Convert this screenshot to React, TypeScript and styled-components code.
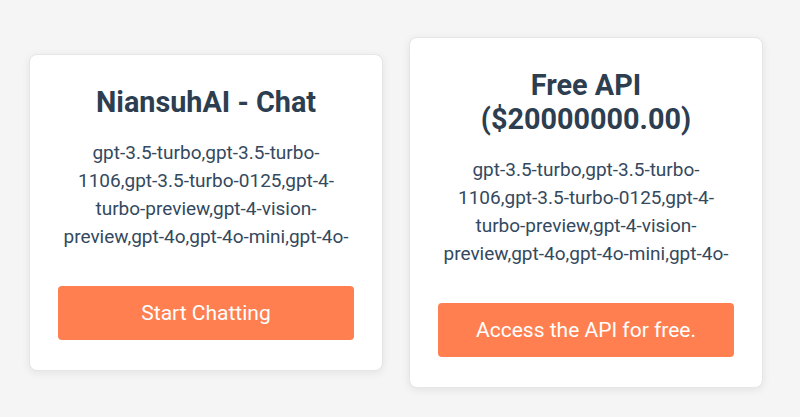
import React from "react";
import styled, { createGlobalStyle } from "styled-components";

const GlobalStyle = createGlobalStyle`
  html, body {
    margin: 0;
    padding: 0;
    background: #f5f5f5;
    font-family: Roboto, "Liberation Sans", Arial, sans-serif;
  }
`;

const MODELS =
  "gpt-3.5-turbo,gpt-3.5-turbo-1106,gpt-3.5-turbo-0125,gpt-4-turbo-preview,gpt-4-vision-preview,gpt-4o,gpt-4o-mini,gpt-4o-2024-08-06,claude-3-haiku";

const plans = [
  { title: "NiansuhAI - Chat", action: "Start Chatting" },
  { title: "Free API ($20000000.00)", action: "Access the API for free." },
];

const App = () => {
  return (
    <>
      <GlobalStyle />
      <Page>
        {plans.map((plan) => (
          <Card key={plan.title}>
            <Title>{plan.title}</Title>
            <Models>{MODELS}</Models>
            <ActionButton>{plan.action}</ActionButton>
          </Card>
        ))}
      </Page>
    </>
  );
};

export default App;

const Page = styled.div`
  display: flex;
  align-items: center;
  gap: 26px;
  min-height: 417px;
  box-sizing: border-box;
  padding: 7px 0 0 29px;
`;

const Card = styled.div`
  width: 354px;
  box-sizing: border-box;
  padding: 30px 28px;
  background: #ffffff;
  border: 1px solid #e6e6e6;
  border-radius: 8px;
  box-shadow: 0 2px 8px rgba(0, 0, 0, 0.08);
  text-align: center;
  display: flex;
  flex-direction: column;
`;

const Title = styled.h2`
  margin: 0 0 20px;
  font-size: 28.8px;
  font-weight: 700;
  color: #2c3e50;
`;

const Models = styled.p`
  margin: 0 0 35px;
  font-size: 19px;
  line-height: 28px;
  max-height: 112px;
  overflow: hidden;
  color: #34495e;
`;

const ActionButton = styled.button`
  border: none;
  border-radius: 4px;
  background: #ff7f50;
  color: #ffffff;
  font-family: inherit;
  font-size: 21px;
  padding: 15px 10px;
  cursor: pointer;
`;
